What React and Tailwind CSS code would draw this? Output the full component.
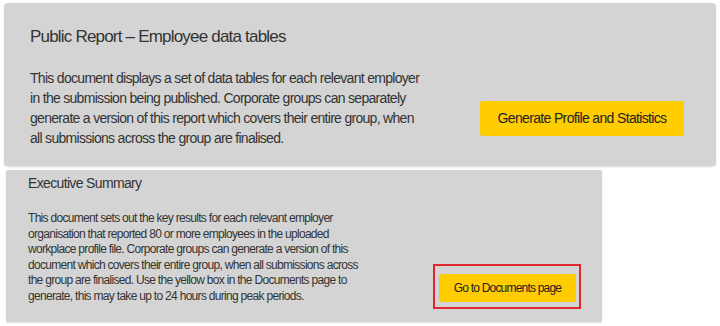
import React from "react";

const ReportCard = () => {
  return (
    <div className="mx-[4px] mt-[3px] h-[163px] rounded-[4px] bg-[#d4d4d4] shadow-[0_1px_2px_rgba(0,0,0,0.15)] flex">
      <div className="pl-[26px] pt-[23px] w-[460px]">
        <h2 className="text-[17px] leading-[22px] tracking-[-0.8px] text-[#333]">
          Public Report – Employee data tables
        </h2>
        <p className="mt-[20px] w-[396px] text-[14px] leading-[20px] tracking-[-0.7px] text-[#333]">
          This document displays a set of data tables for each relevant employer
          in the submission being published. Corporate groups can separately
          generate a version of this report which covers their entire group, when
          all submissions across the group are finalised.
        </p>
      </div>
      <div className="pt-[98px] pl-[16px]">
        <button className="w-[204px] h-[35px] rounded-[3px] bg-[#ffcc00] text-[14px] tracking-[-0.65px] text-[#222]">
          Generate Profile and Statistics
        </button>
      </div>
    </div>
  );
};

const SummaryCard = () => {
  return (
    <div className="ml-[6px] mt-[4px] w-[596px] h-[152px] rounded-[2px] bg-[#d4d4d4] shadow-[0_1px_2px_rgba(0,0,0,0.12)] flex">
      <div className="pl-[22px] pt-[4px] w-[420px]">
        <h3 className="text-[14px] leading-[18px] tracking-[-0.65px] text-[#333]">Executive Summary</h3>
        <p className="mt-[19px] w-[336px] text-[12px] leading-[15.5px] tracking-[-0.7px] text-[#333]">
          This document sets out the key results for each relevant employer
          organisation that reported 80 or more employees in the uploaded
          workplace profile file. Corporate groups can generate a version of this
          document which covers their entire group, when all submissions across
          the group are finalised. Use the yellow box in the Documents page to
          generate, this may take up to 24 hours during peak periods.
        </p>
      </div>
      <div className="pt-[94px] pl-[7px]">
        <div className="w-[148px] h-[45px] border-2 border-[#e0262f] pl-[4px] pr-[3px] pt-[8px]">
          <button className="w-full h-[28px] rounded-[3px] bg-[#ffcc00] text-[12px] tracking-[-0.8px] text-[#222]">
            Go to Documents page
          </button>
        </div>
      </div>
    </div>
  );
};

export default function App() {
  return (
    <div className="w-[720px] h-[326px] bg-white overflow-hidden font-['Liberation_Sans',Arial,sans-serif]">
      <ReportCard />
      <SummaryCard />
    </div>
  );
}
